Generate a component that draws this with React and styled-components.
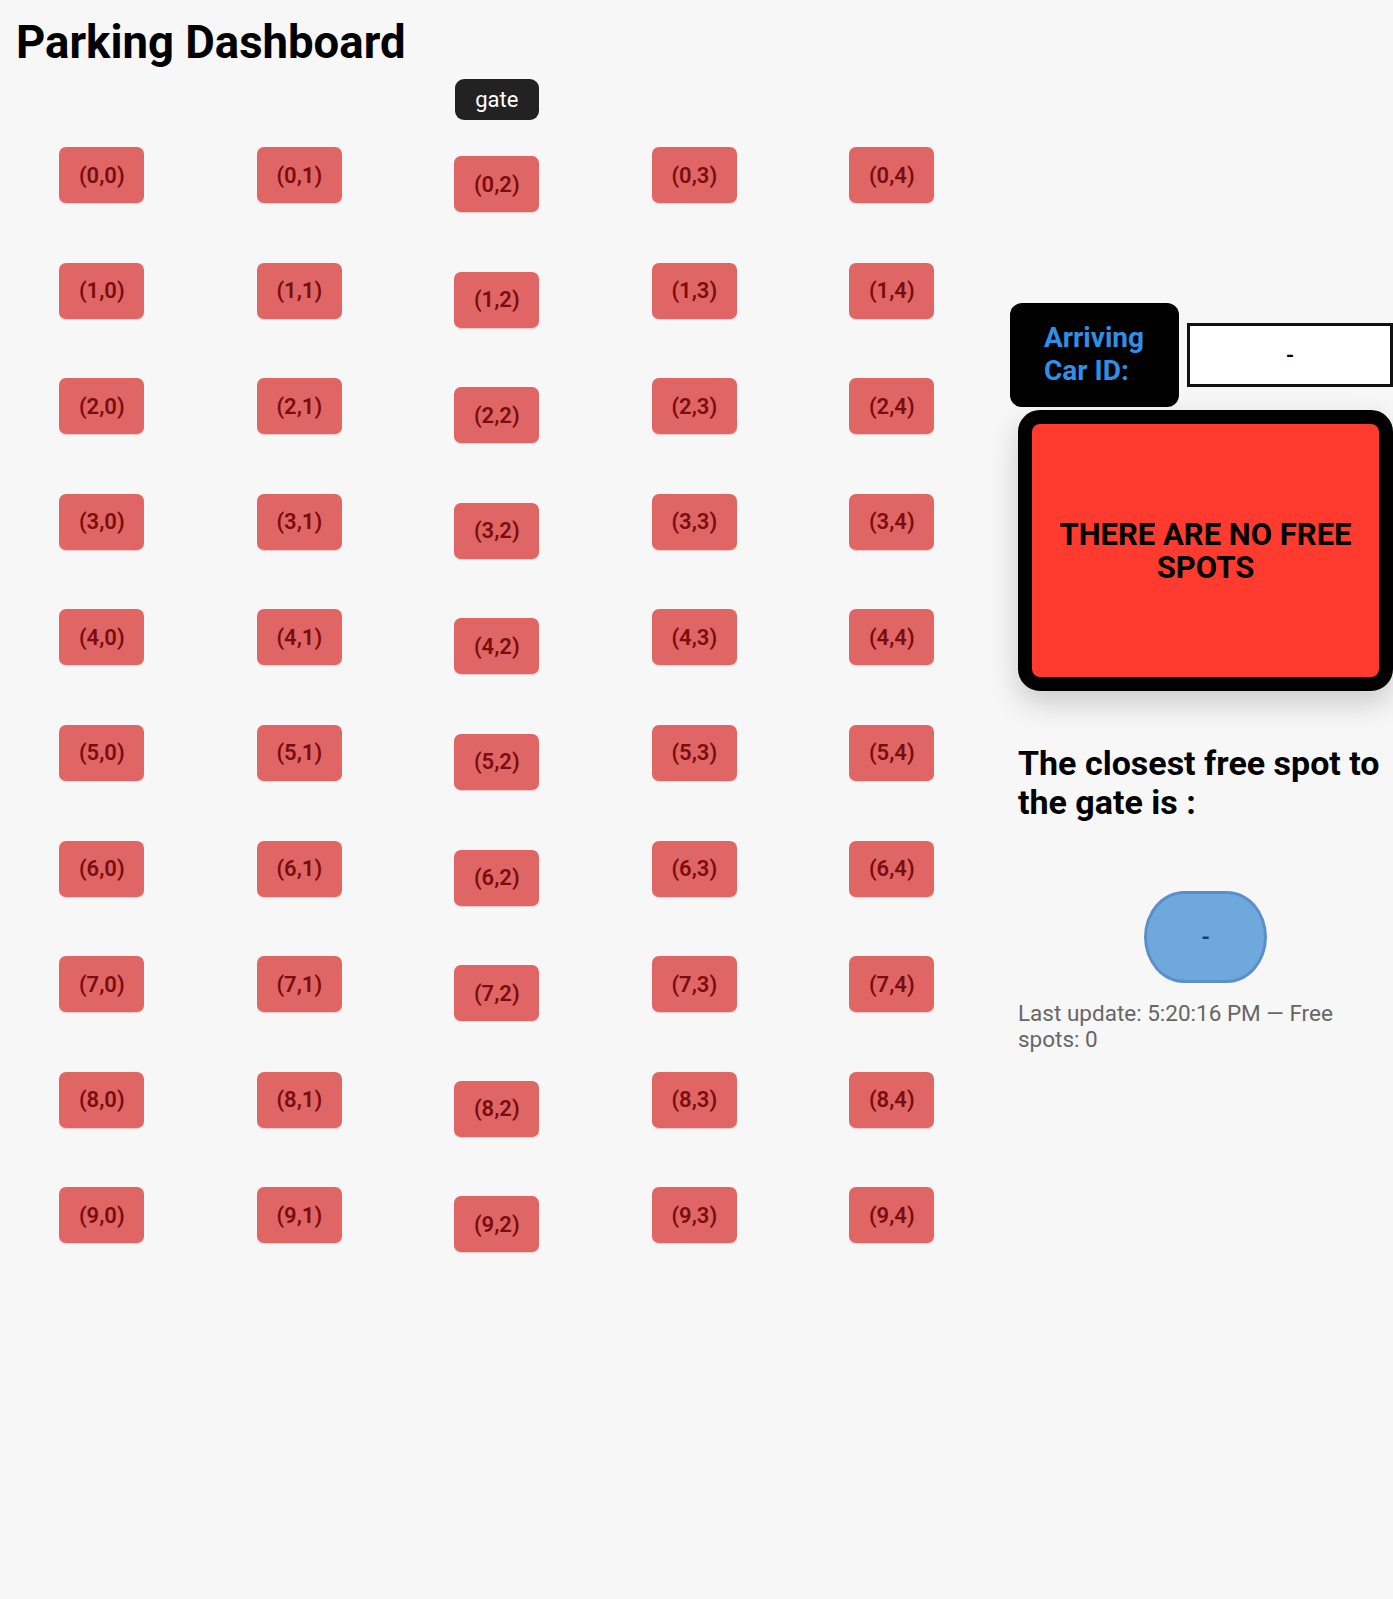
/* --------------------------------- IMPORT --------------------------------- */
import styled, { createGlobalStyle } from 'styled-components'

/* ---------------------------------- DATA ---------------------------------- */
const ROWS = 10
const COLS = 5
const GATE_COL = 2

/* ----------------------------------- APP ---------------------------------- */
export default function App() {
  const columns = Array.from({ length: COLS }, (_, c) => c)
  const rows = Array.from({ length: ROWS }, (_, r) => r)

  return (
    <>
      <GlobalStyles />

      <Page>
        <Title>Parking Dashboard</Title>

        <Main>
          {/* LOT */}
          <Lot>
            {columns.map((c) => (
              <Column key={c} $gate={c === GATE_COL}>
                {c === GATE_COL && <Gate>gate</Gate>}
                <SpotStack>
                  {rows.map((r) => (
                    <Spot key={r}>
                      ({r},{c})
                    </Spot>
                  ))}
                </SpotStack>
              </Column>
            ))}
          </Lot>

          {/* SIDE PANEL */}
          <Side>
            <IdRow>
              <IdLabel>
                Arriving
                <br />
                Car ID:
              </IdLabel>
              <IdInput type='text' value='-' readOnly />
            </IdRow>

            <Alert>THERE ARE NO FREE SPOTS</Alert>

            <Heading>The closest free spot to the gate is :</Heading>

            <Closest>-</Closest>

            <Updated>Last update: 5:20:16 PM — Free spots: 0</Updated>
          </Side>
        </Main>
      </Page>
    </>
  )
}

/* --------------------------------- STYLES --------------------------------- */
const GlobalStyles = createGlobalStyle`
  html, body {
    margin: 0;
    padding: 0;
    background: #f7f7f7;
    overflow-x: hidden;
  }

  body {
    font-family: Roboto, 'Noto Sans', 'Liberation Sans', sans-serif;
    color: #000;
  }

  * {
    box-sizing: border-box;
  }
`

const Page = styled.div`
  min-height: 100vh;
  width: 1393px;
`

const Title = styled.h1`
  margin: 16px 0 0 16px;

  font-size: 45.5px;
  font-weight: 700;
  line-height: 53px;
`

const Main = styled.div`
  display: flex;
  align-items: flex-start;

  margin-top: 10px;
  padding-left: 3px;
`

/* LOT */
const Lot = styled.div`
  display: grid;
  grid-template-columns: repeat(5, 197.5px);
  flex-shrink: 0;
`

const Column = styled.div`
  display: flex;
  flex-direction: column;
  align-items: center;

  padding-top: ${({ $gate }) => ($gate ? '0' : '68px')};
`

const Gate = styled.div`
  display: flex;
  justify-content: center;
  align-items: center;

  width: 84px;
  height: 41px;
  margin-bottom: 36px;

  border-radius: 9px;
  background: #222;

  font-size: 22px;
  color: #fff;
`

const SpotStack = styled.div`
  display: flex;
  flex-direction: column;
  gap: 59.6px;
`

const Spot = styled.div`
  display: flex;
  justify-content: center;
  align-items: center;

  width: 85px;
  height: 56px;

  border-radius: 7px;
  background: #e06666;
  box-shadow: 0 1px 0 rgba(255, 190, 190, 0.8);

  font-size: 22px;
  font-weight: 600;
  color: #7a0d0d;
`

/* SIDE PANEL */
const Side = styled.div`
  display: flex;
  flex-direction: column;

  width: 375px;
  margin: 224px 0 0 27.5px;
  flex-shrink: 0;
`

const IdRow = styled.div`
  display: flex;
  align-items: center;
  gap: 8px;

  width: 383px;
  margin-left: -8px;
`

const IdLabel = styled.div`
  display: flex;
  flex-direction: column;
  justify-content: center;

  width: 169px;
  height: 104px;
  padding-left: 34px;

  border-radius: 12px;
  background: #000;

  font-size: 28px;
  font-weight: 700;
  line-height: 32.6px;
  color: #2f8fe6;
`

const IdInput = styled.input`
  width: 206px;
  height: 64px;
  padding: 0;

  border: 3px solid #111;
  border-radius: 0;
  background: #fff;
  outline: none;

  font-family: Roboto, sans-serif;
  font-size: 22px;
  font-weight: 600;
  text-align: center;
  color: #000;
`

const Alert = styled.div`
  display: flex;
  justify-content: center;
  align-items: center;

  height: 281px;
  margin-top: 3px;
  padding: 0 16px;

  border: 14px solid #000;
  border-radius: 22px;
  background: #ff3b2f;
  box-shadow: 0 12px 30px rgba(0, 0, 0, 0.18);

  font-size: 31px;
  font-weight: 700;
  line-height: 33px;
  text-align: center;
  color: #000;
`

const Heading = styled.h2`
  margin: 53px 0 0;

  font-size: 34px;
  font-weight: 700;
  line-height: 39px;
`

const Closest = styled.div`
  display: flex;
  justify-content: center;
  align-items: center;

  align-self: center;
  width: 123px;
  height: 92px;
  margin-top: 69px;

  border: 3px solid #5b8fcb;
  border-radius: 40px / 46px;
  background: #6fa8dc;

  font-size: 22px;
  font-weight: 700;
  color: #0b3e7a;
`

const Updated = styled.p`
  max-width: 360px;
  margin: 18px 0 0;

  font-size: 22.5px;
  line-height: 25.8px;
  color: #666;
`
